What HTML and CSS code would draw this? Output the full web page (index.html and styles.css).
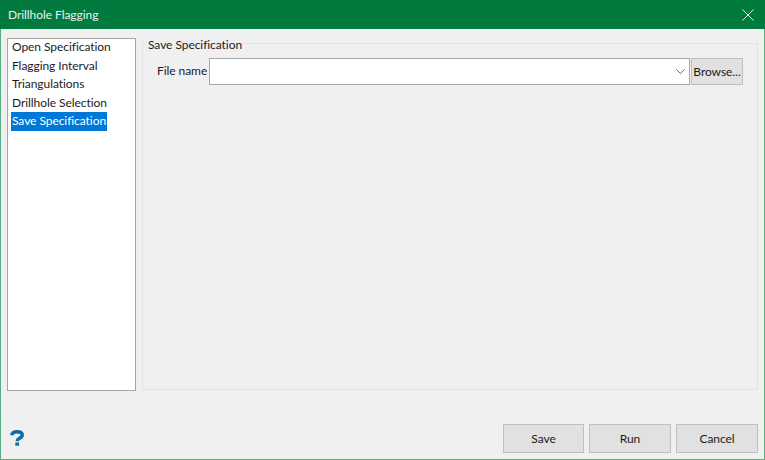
FILE: index.html
```html
<!DOCTYPE html>
<html lang="en">
<head>
<meta charset="utf-8">
<title>Drillhole Flagging</title>
<link rel="stylesheet" href="styles.css">
</head>
<body>
<div class="window">
  <header class="titlebar">
    <span class="title">Drillhole Flagging</span>
    <svg class="close" width="12" height="12" viewBox="0 0 12 12"><path d="M.5.5l11 11M11.500.5l-11 11" stroke="#e4f1ea" stroke-width="1" fill="none"/></svg>
  </header>
  <div class="content">
    <div class="main">
      <ul class="nav">
        <li>Open Specification</li>
        <li>Flagging Interval</li>
        <li>Triangulations</li>
        <li>Drillhole Selection</li>
        <li><span class="selected">Save Specification</span></li>
      </ul>
      <section class="group">
        <div class="legend">Save Specification</div>
        <div class="row">
          <label class="field-label">File name</label>
          <div class="combo">
            <svg width="9" height="5" viewBox="0 0 9 5"><path d="M.5.5l4 4 4-4" stroke="#666" fill="none"/></svg>
          </div>
          <button class="btn browse">Browse...</button>
        </div>
      </section>
    </div>
    <footer class="footer">
      <svg class="help" width="14" height="16" viewBox="0 0 14 16" role="img" aria-label="Help"><path d="M1.800 5.200C2.200 2.800 4.400 1.800 7 1.800c3 0 5.200 1.200 5.200 3.300 0 2-1.500 2.600-3 3.400-1.300.7-1.900 1.200-1.900 2.700" stroke="#0a6fa8" stroke-width="3.500" fill="none"/><rect x="5.300" y="12.500" width="3.800" height="3.200" fill="#0a6fa8"/></svg>
      <div class="actions">
        <button class="btn action">Save</button>
        <button class="btn action">Run</button>
        <button class="btn action">Cancel</button>
      </div>
    </footer>
  </div>
</div>
</body>
</html>
```
FILE: styles.css
```css
* { box-sizing: border-box; }
html, body { margin: 0; height: 100%; }
body { font-family: Lato, Roboto, sans-serif; font-size: 12px; letter-spacing: -0.06px; color: #1c1c1c; overflow: hidden; }
.window { width: 765px; height: 460px; display: flex; flex-direction: column; background: #f0f0f0; border: 1px solid #5aae86; border-top: 0; }
.titlebar { height: 29px; margin: 0 -1px; padding: 0 11px 0 8px; background: #017a3e; color: #e8f3ee; display: flex; align-items: center; justify-content: space-between; flex: none; }
.content { flex: 1; display: flex; flex-direction: column; padding: 9px 6px 6px; }
.main { display: flex; gap: 6px; height: 353px; }
.nav { width: 129px; margin: 0; padding: 0 3px; list-style: none; background: #fff; border: 1px solid #a5a5a5; flex: none; }
.nav li { height: 18.500px; line-height: 18.500px; padding-left: 1px; white-space: nowrap; }
.nav li:first-child { margin-top: -1px; }
.selected { display: inline-block; margin-left: -1px; padding: 0 1px; background: #0078d7; color: #fff; }
.group { width: 616px; flex: none; margin-top: 5px; height: 347px; border: 1px solid #e3e3e3; position: relative; }
.legend { position: absolute; left: 3px; top: -7px; padding: 0 2px; background: #f0f0f0; line-height: 16px; }
.row { display: flex; align-items: center; margin: 14px 14px 0 14px; }
.field-label { width: 52px; flex: none; padding-bottom: 2px; white-space: nowrap; }
.combo { width: 481px; height: 27px; flex: none; background: #fff; border: 1px solid #a8a8a8; display: flex; align-items: center; justify-content: flex-end; padding-right: 4px; }
.btn { font: inherit; letter-spacing: inherit; color: inherit; background: #e1e1e1; border: 1px solid #bfbfbf; padding: 0; }
.browse { width: 52px; height: 27px; margin-left: 1px; flex: none; }
.footer { flex: 1; display: flex; align-items: flex-end; justify-content: space-between; }
.help { margin: 0 0 7px 3px; }
.actions { display: flex; gap: 5px; }
.action { width: 82px; height: 29px; }
.action:first-child { width: 81px; }
```
